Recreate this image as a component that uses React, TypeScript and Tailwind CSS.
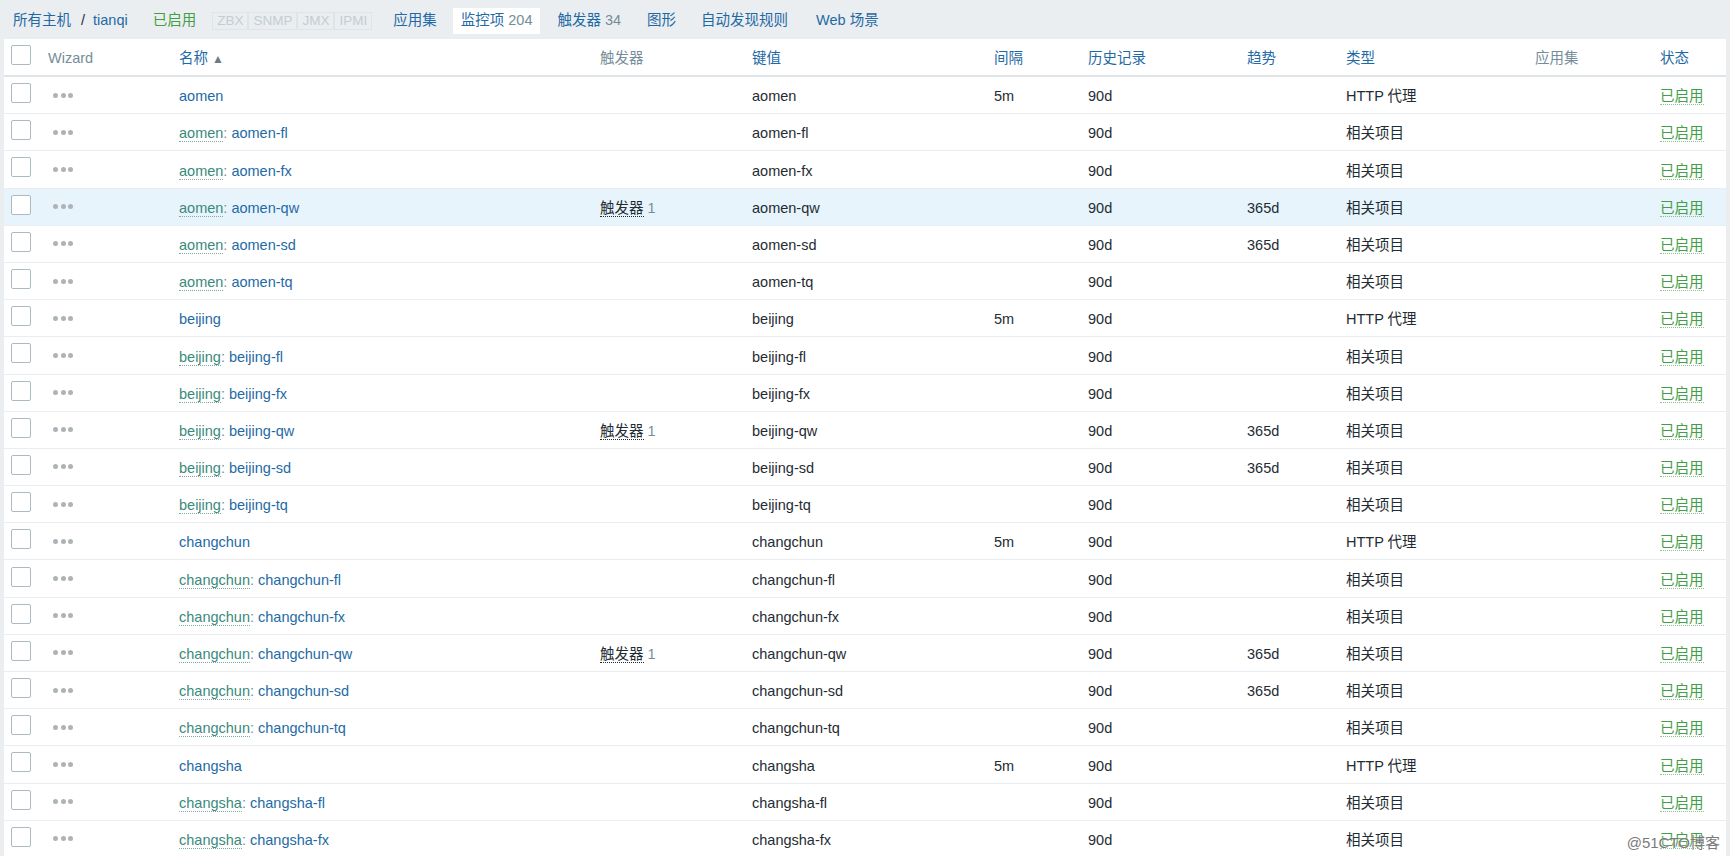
import React from 'react';

const FONT = { fontFamily: '"Liberation Sans", Arial, "Noto Sans CJK SC", sans-serif' };

interface Item {
  host?: string;
  name: string;
  trigger?: boolean;
  key: string;
  interval?: string;
  trend?: string;
  type: string;
}

const buildItems = (city: string, count: number): Item[] => {
  const subs = ['fl', 'fx', 'qw', 'sd', 'tq'];
  const rows: Item[] = [{ name: city, key: city, interval: '5m', type: 'HTTP 代理' }];
  subs.slice(0, count - 1).forEach((s) => {
    rows.push({
      host: city,
      name: `${city}-${s}`,
      key: `${city}-${s}`,
      trigger: s === 'qw',
      trend: s === 'qw' || s === 'sd' ? '365d' : undefined,
      type: '相关项目',
    });
  });
  return rows;
};

const items: Item[] = [
  ...buildItems('aomen', 6),
  ...buildItems('beijing', 6),
  ...buildItems('changchun', 6),
  ...buildItems('changsha', 3),
];

const GRID = 'grid grid-cols-[44px_131px_421px_152px_242px_94px_159px_99px_189px_125px_1fr] items-center';

const Checkbox = () => (
  <div className="relative top-[-2px] ml-[7px] w-[20px] h-[20px] border border-[#acbbc2] rounded-[2px] bg-white" />
);

const Dots = () => (
  <div className="flex gap-[2.5px] ml-[5px]">
    <span className="w-[5px] h-[5px] rounded-full bg-[#adb3b7]" />
    <span className="w-[5px] h-[5px] rounded-full bg-[#adb3b7]" />
    <span className="w-[5px] h-[5px] rounded-full bg-[#adb3b7]" />
  </div>
);

const NavBox = ({ label }: { label: string }) => (
  <span className="px-[4px] h-[18px] leading-[16px] border border-[#dfe4e7] text-[#c4cdd2] text-[13.5px]">{label}</span>
);

export default function App() {
  return (
    <div className="relative w-[1730px] h-[856px] overflow-hidden bg-[#ebeef0] text-[14.5px] text-[#1f2c33]" style={FONT}>
      {/* host nav */}
      <div className="h-[39px] flex items-center pl-[13px] pt-[2px]">
        <span className="text-[#1f6aa5]">所有主机</span>
        <span className="text-[#1f2c33] ml-[10px]">/</span>
        <span className="text-[#1f6aa5] ml-[8px]">tianqi</span>
        <span className="text-[#429e47] ml-[25px]">已启用</span>
        <div className="flex ml-[16px]">
          <NavBox label="ZBX" />
          <NavBox label="SNMP" />
          <NavBox label="JMX" />
          <NavBox label="IPMI" />
        </div>
        <span className="text-[#1f6aa5] ml-[21px]">应用集</span>
        <span className="ml-[16px] h-[26px] px-[8px] flex items-center bg-white">
          <span className="text-[#1f6aa5]">监控项</span>
          <span className="text-[#768d99] ml-[4px]">204</span>
        </span>
        <span className="text-[#1f6aa5] ml-[17px]">触发器</span>
        <span className="text-[#768d99] ml-[4px]">34</span>
        <span className="text-[#1f6aa5] ml-[26px]">图形</span>
        <span className="text-[#1f6aa5] ml-[25px]">自动发现规则</span>
        <span className="text-[#1f6aa5] ml-[28px]">Web 场景</span>
      </div>

      {/* item table */}
      <div className="ml-[4px] mr-[4px] bg-white">
        <div className={`${GRID} h-[38px] border-b-2 border-[#dfe4e7] [&>span]:relative [&>span]:top-[2px]`}>
          <Checkbox />
          <span className="text-[#768d99]">Wizard</span>
          <span className="text-[#1f6aa5]">
            名称 <span className="text-[#6f7a80] text-[12px]">▲</span>
          </span>
          <span className="text-[#768d99]">触发器</span>
          <span className="text-[#1f6aa5]">键值</span>
          <span className="text-[#1f6aa5]">间隔</span>
          <span className="text-[#1f6aa5]">历史记录</span>
          <span className="text-[#1f6aa5]">趋势</span>
          <span className="text-[#1f6aa5]">类型</span>
          <span className="text-[#768d99]">应用集</span>
          <span className="text-[#1f6aa5]">状态</span>
        </div>

        {items.map((it, i) => (
          <div
            key={i}
            className={`${GRID} h-[37.2px] border-b border-[#ebeef0] [&>span]:relative [&>span]:top-[2px] ${i === 3 ? 'bg-[#e8f4fc]' : ''}`}
          >
            <Checkbox />
            <Dots />
            <span>
              {it.host && (
                <>
                  <span className="text-[#3a8a7c] border-b border-dotted border-[#7fa9a0]">{it.host}</span>
                  <span className="text-[#768d99]">: </span>
                </>
              )}
              <span className="text-[#1f6aa5]">{it.name}</span>
            </span>
            <span>
              {it.trigger && (
                <>
                  <span className="border-b border-dotted border-[#1f2c33]">触发器</span>
                  <span className="text-[#768d99] ml-[4px]">1</span>
                </>
              )}
            </span>
            <span>{it.key}</span>
            <span>{it.interval}</span>
            <span>90d</span>
            <span>{it.trend}</span>
            <span>{it.type}</span>
            <span />
            <span>
              <span className="text-[#429e47] border-b border-dotted border-[#8fbf92]">已启用</span>
            </span>
          </div>
        ))}
      </div>

      <span className="absolute right-[10px] bottom-[2px] text-[15px] text-[#7a7a7a]" style={{ textShadow: '0 0 2px #fff' }}>
        @51CTO博客
      </span>
    </div>
  );
}
